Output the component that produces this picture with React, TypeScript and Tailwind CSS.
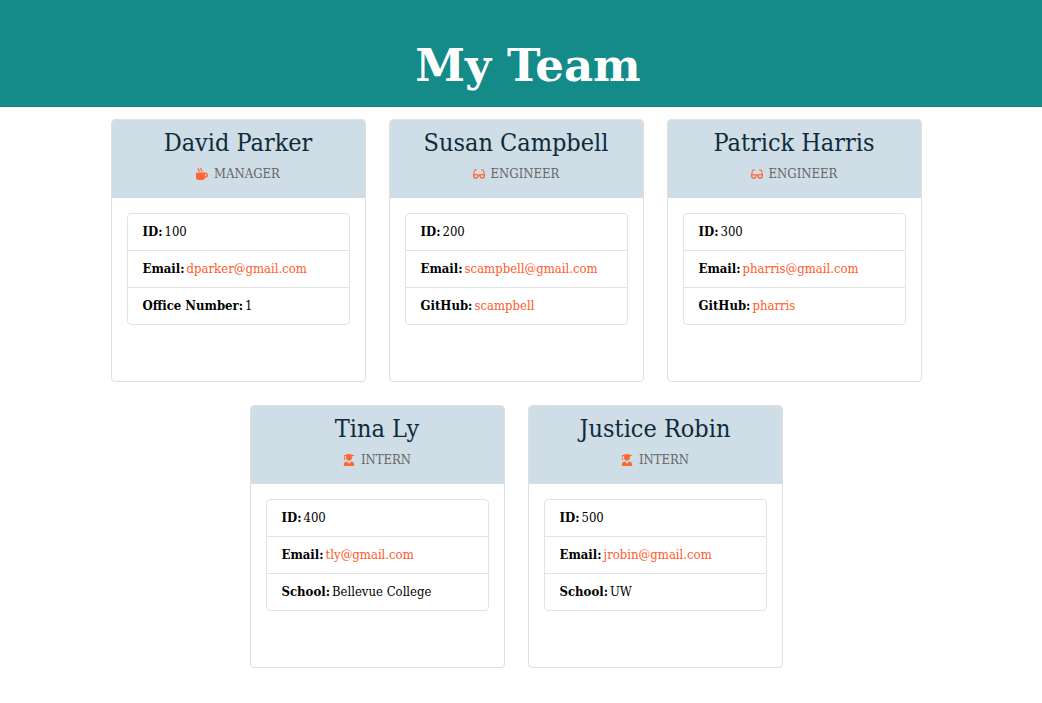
import type { IconType } from "react-icons";
import { FaGlasses, FaMugHot, FaUserGraduate } from "react-icons/fa";

interface Detail {
  label: string;
  value: string;
  href?: string;
}

interface Member {
  name: string;
  role: "Manager" | "Engineer" | "Intern";
  details: Detail[];
}

const icons: Record<Member["role"], IconType> = {
  Manager: FaMugHot,
  Engineer: FaGlasses,
  Intern: FaUserGraduate,
};

function member(name: string, role: Member["role"], id: string, email: string, extra: Detail): Member {
  return {
    name,
    role,
    details: [{ label: "ID", value: id }, { label: "Email", value: email, href: `mailto:${email}` }, extra],
  };
}

const team: Member[] = [
  member("David Parker", "Manager", "100", "dparker@gmail.com", { label: "Office Number", value: "1" }),
  member("Susan Campbell", "Engineer", "200", "scampbell@gmail.com", {
    label: "GitHub",
    value: "scampbell",
    href: "https://github.com/scampbell",
  }),
  member("Patrick Harris", "Engineer", "300", "pharris@gmail.com", {
    label: "GitHub",
    value: "pharris",
    href: "https://github.com/pharris",
  }),
  member("Tina Ly", "Intern", "400", "tly@gmail.com", { label: "School", value: "Bellevue College" }),
  member("Justice Robin", "Intern", "500", "jrobin@gmail.com", { label: "School", value: "UW" }),
];

function MemberCard({ name, role, details }: Member) {
  const Icon = icons[role];
  return (
    <article className="w-[255px] overflow-hidden rounded border border-[#dfdfdf] bg-white pb-14">
      <header className="flex flex-col items-center bg-[#cfdde6] pt-2 pb-3.5">
        <h2 className="text-[25px] leading-[30px] whitespace-nowrap text-[#0f2b3a]">{name}</h2>
        <p className="mt-1.5 flex items-center gap-1.5 text-[13px] leading-5 text-[#666666] uppercase">
          <Icon className="h-3 w-auto text-[#ff6633]" aria-hidden="true" />
          {role}
        </p>
      </header>
      <ul className="mx-[15px] mt-[15px] divide-y divide-[#e3e3e3] rounded border border-[#e3e3e3]">
        {details.map(({ label, value, href }) => (
          <li
            key={label}
            className="flex gap-0.5 px-[15px] py-2 text-[13px] leading-5 whitespace-nowrap text-black"
          >
            <strong className="font-bold">{label}:</strong>
            {href ? (
              <a href={href} className="text-[#ff5a2b]">
                {value}
              </a>
            ) : (
              <span>{value}</span>
            )}
          </li>
        ))}
      </ul>
    </article>
  );
}

export default function App() {
  return (
    <div className="min-h-screen bg-white font-['DejaVu_Serif_Condensed','DejaVu_Serif',serif]">
      <header className="border-b border-[#0f8482] bg-[#148b89] pt-9 pb-2.5 pl-3.5 text-center">
        <h1 className="font-['DejaVu_Serif',serif] text-[45px] leading-[60px] font-bold text-white">My Team</h1>
      </header>
      <main className="mx-auto flex max-w-[900px] flex-wrap justify-center gap-[23px] pt-3 pr-2.5 pb-9">
        {team.map((person) => (
          <MemberCard key={person.name} {...person} />
        ))}
      </main>
    </div>
  );
}
